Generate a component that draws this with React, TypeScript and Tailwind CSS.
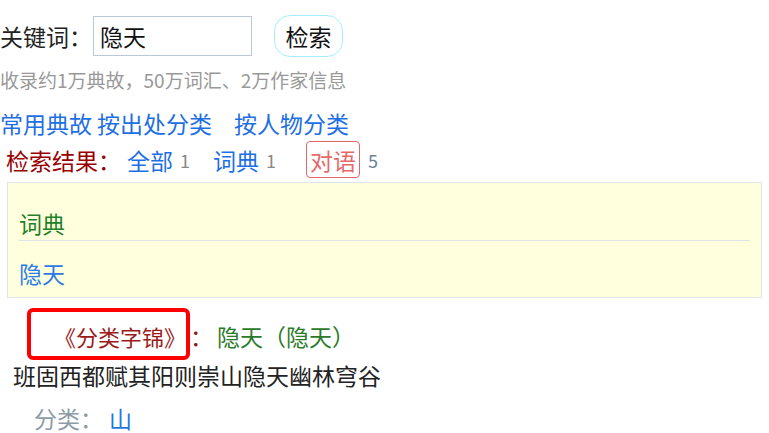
import { useState } from "react";

export default function App() {
  const [keyword, setKeyword] = useState("隐天");

  return (
    <div className="min-h-screen bg-white font-['Noto_Sans_CJK_SC',sans-serif] text-[23px] text-[#222]">
      {/* search bar */}
      <div className="flex items-center pt-[15px]">
        <span className="leading-[30px]">关键词：</span>
        <input
          value={keyword}
          onChange={(e) => setKeyword(e.target.value)}
          className="ml-px h-[40px] w-[159px] border border-[#b9c9d9] px-[6px] text-[23px] text-[#111] outline-none"
        />
        <button
          type="button"
          className="ml-[22px] h-[42px] w-[69px] rounded-[16px] border border-[#a6eef8] bg-white text-[23px] leading-none text-[#111]"
        >
          检索
        </button>
      </div>

      <p className="mt-[11px] text-[19px] leading-[24px] text-[#999]">
        收录约1万典故，50万词汇、2万作家信息
      </p>

      {/* categories */}
      <div className="mt-[16px] flex leading-[30px] text-[#1e6fe3]">
        <a className="mr-[5px] cursor-pointer">常用典故</a>
        <a className="mr-[22px] cursor-pointer">按出处分类</a>
        <a className="cursor-pointer">按人物分类</a>
      </div>

      {/* result tabs */}
      <div className="mt-[3px] flex items-center pl-[6px] leading-[30px]">
        <span className="text-[#990000]">检索结果：</span>
        <a className="ml-[6px] text-[#1e6fe3]">全部</a>
        <span className="ml-[7px] text-[18px] text-[#888]">1</span>
        <a className="ml-[23px] text-[#1e6fe3]">词典</a>
        <span className="ml-[7px] text-[18px] text-[#888]">1</span>
        <span className="ml-[30px] flex h-[37px] items-center rounded-[4px] border border-[#e06868] px-[3px] text-[#e46a6a]">
          对语
        </span>
        <span className="ml-[8px] text-[18px] text-[#6e8296]">5</span>
      </div>

      {/* dictionary box */}
      <div className="mx-[7px] mt-[4px] border border-[#e1e3ea] bg-[#ffffdd] pb-[9px] pl-[11px] pr-[11px] pt-[25px]">
        <div className="border-b border-[#e0e2e6] pb-[2px] leading-[30px] text-[#1f7f2a]">
          词典
        </div>
        <div className="mt-[17px] leading-[30px] text-[#2c7be5]">隐天</div>
      </div>

      {/* source line */}
      <div className="ml-[27px] mt-[10px] flex items-center">
        <span className="flex h-[52px] w-[163px] items-center whitespace-nowrap rounded-[6px] border-4 border-[#ff0000] pl-[23px] pt-[3px] text-[22px] leading-[30px] text-[#9b1b1b]">
          《分类字锦》
        </span>
        <span className="pt-[3px] leading-[30px] text-[#8a1a1a]">：</span>
        <span className="ml-[4px] pt-[3px] leading-[30px] text-[#2a7a2a]">隐天（隐天）</span>
      </div>

      <p className="pl-[13px] leading-[30px] text-[#222]">
        班固西都赋其阳则崇山隐天幽林穹谷
      </p>

      <div className="mt-[15px] flex pl-[34px] leading-[26px]">
        <span className="text-[#8d9ba8]">分类：</span>
        <a className="ml-[6px] text-[#1e78e0]">山</a>
      </div>
    </div>
  );
}
